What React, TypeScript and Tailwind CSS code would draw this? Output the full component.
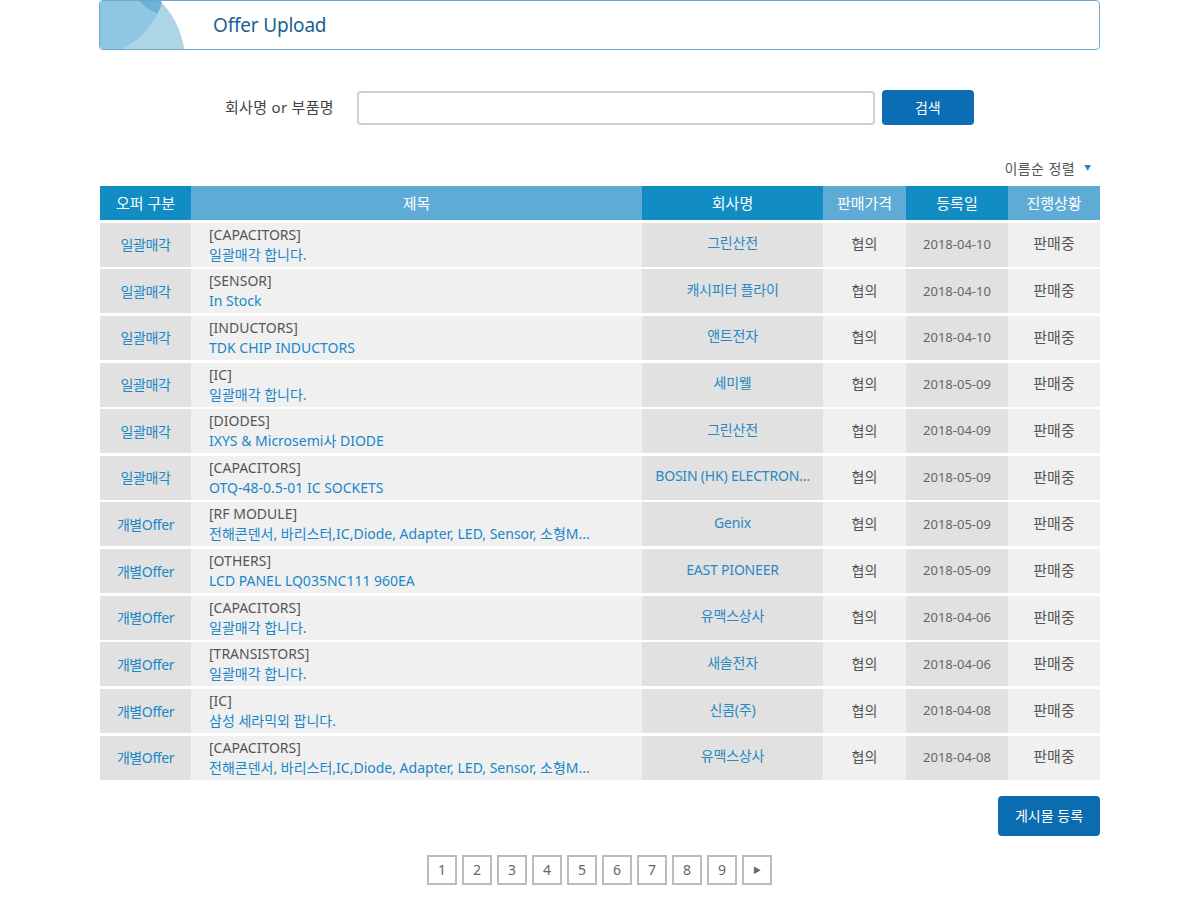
const rows = [
  { type: "일괄매각", cat: "[CAPACITORS]", title: "일괄매각 합니다.", company: "그린산전", date: "2018-04-10" },
  { type: "일괄매각", cat: "[SENSOR]", title: "In Stock", company: "캐시피터 플라이", date: "2018-04-10" },
  { type: "일괄매각", cat: "[INDUCTORS]", title: "TDK CHIP INDUCTORS", company: "앤트전자", date: "2018-04-10" },
  { type: "일괄매각", cat: "[IC]", title: "일괄매각 합니다.", company: "세미웰", date: "2018-05-09" },
  { type: "일괄매각", cat: "[DIODES]", title: "IXYS & Microsemi사 DIODE", company: "그린산전", date: "2018-04-09" },
  { type: "일괄매각", cat: "[CAPACITORS]", title: "OTQ-48-0.5-01 IC SOCKETS", company: "BOSIN (HK) ELECTRON...", date: "2018-05-09" },
  { type: "개별Offer", cat: "[RF MODULE]", title: "전해콘덴서, 바리스터,IC,Diode, Adapter, LED, Sensor, 소형M...", company: "Genix", date: "2018-05-09" },
  { type: "개별Offer", cat: "[OTHERS]", title: "LCD PANEL LQ035NC111 960EA", company: "EAST PIONEER", date: "2018-05-09" },
  { type: "개별Offer", cat: "[CAPACITORS]", title: "일괄매각 합니다.", company: "유맥스상사", date: "2018-04-06" },
  { type: "개별Offer", cat: "[TRANSISTORS]", title: "일괄매각 합니다.", company: "새솔전자", date: "2018-04-06" },
  { type: "개별Offer", cat: "[IC]", title: "삼성 세라믹외 팝니다.", company: "신콤(주)", date: "2018-04-08" },
  { type: "개별Offer", cat: "[CAPACITORS]", title: "전해콘덴서, 바리스터,IC,Diode, Adapter, LED, Sensor, 소형M...", company: "유맥스상사", date: "2018-04-08" },
];

const BannerArt = () => (
  <svg width="86" height="48" viewBox="0 0 86 48" className="shrink-0">
    <defs>
      <clipPath id="c1">
        <circle cx="0" cy="60" r="85" />
      </clipPath>
      <clipPath id="c2">
        <circle cx="-10" cy="-20" r="75" />
      </clipPath>
    </defs>
    <circle cx="0" cy="60" r="85" fill="#acd5e8" />
    <g clipPath="url(#c1)">
      <circle cx="-10" cy="-20" r="75" fill="#8fc6e1" />
      <g clipPath="url(#c2)">
        <circle cx="82" cy="-42" r="60" fill="#6eb1d7" />
      </g>
    </g>
  </svg>
);

export default function App() {
  return (
    <div
      className="w-[1200px] min-h-[910px] bg-white text-[14px] text-[#555]"
      style={{ fontFamily: '"Noto Sans", "Noto Sans CJK KR", sans-serif' }}
    >
      <div className="w-[1001px] ml-[99px]">
        {/* banner */}
        <div className="flex items-center h-[50px] border border-[#6aa8cc] rounded-[4px] overflow-hidden">
          <BannerArt />
          <span className="ml-[27px] text-[19px] text-[#1a5f94] tracking-[-0.2px]">Offer Upload</span>
        </div>

        {/* search */}
        <div className="flex items-center mt-[40px] h-[35px]">
          <span className="ml-[126px] text-[15px] text-[#444] tracking-[0.3px]">회사명 or 부품명</span>
          <input className="ml-[23px] w-[518px] h-[34px] border-2 border-[#cfcfcf] rounded-[4px] outline-none px-2" />
          <button className="ml-[7px] w-[92px] h-[35px] bg-[#0b6db3] rounded-[4px] text-white text-[14px]">검색</button>
        </div>

        {/* sort */}
        <div className="flex justify-end items-center mt-[34px] h-[18px] pr-[9px] text-[14px] text-[#555]">
          <span className="tracking-[0.4px]">이름순 정렬</span>
          <span className="ml-[9px] text-[7px] text-[#1a87c6]">▼</span>
        </div>

        {/* table */}
        <div className="mt-[9px] ml-[1px] w-[1000px]">
          <div className="flex h-[34px] text-white text-[15px]">
            <div className="w-[91px] bg-[#118dc4] flex items-center justify-center">오퍼 구분</div>
            <div className="w-[451px] bg-[#5eabd6] flex items-center justify-center">제목</div>
            <div className="w-[181px] bg-[#118dc4] flex items-center justify-center">회사명</div>
            <div className="w-[83px] bg-[#5eabd6] flex items-center justify-center">판매가격</div>
            <div className="w-[102px] bg-[#118dc4] flex items-center justify-center">등록일</div>
            <div className="w-[92px] bg-[#5eabd6] flex items-center justify-center">진행상황</div>
          </div>
          {rows.map((r, i) => (
            <div key={i} className="flex h-[44px] mt-[2.65px]">
              <div className="w-[91px] bg-[#e1e1e1] flex items-center justify-center text-[#1a87c6] tracking-[-0.4px]">
                {r.type}
              </div>
              <div className="w-[451px] bg-[#f0f0f0] flex flex-col justify-center pl-[18px] leading-[20px]">
                <span className="text-[#555]">{r.cat}</span>
                <span className="text-[#1a87c6] whitespace-nowrap">{r.title}</span>
              </div>
              <div className="w-[181px] bg-[#e1e1e1] flex items-center justify-center pb-[4px] text-[#2a88c3] text-[14px] tracking-[-0.2px] whitespace-nowrap">
                {r.company}
              </div>
              <div className="w-[83px] bg-[#f0f0f0] flex items-center justify-center pb-[2px] text-[#555]">협의</div>
              <div className="w-[102px] bg-[#e1e1e1] flex items-center justify-center text-[13px] text-[#666]">
                {r.date}
              </div>
              <div className="w-[92px] bg-[#f0f0f0] flex items-center justify-center pb-[2px] text-[15px] text-[#555]">판매중</div>
            </div>
          ))}
        </div>

        {/* register */}
        <div className="flex justify-end mt-[16px]">
          <button className="w-[102px] h-[40px] bg-[#0b6db0] rounded-[4px] text-white text-[14px]">게시물 등록</button>
        </div>

        {/* pagination */}
        <div className="flex justify-center gap-[5px] mt-[19px]">
          {["1", "2", "3", "4", "5", "6", "7", "8", "9"].map((n) => (
            <div
              key={n}
              className="w-[30px] h-[30px] border-2 border-[#bbb] flex items-center justify-center text-[14px] text-[#666]"
            >
              {n}
            </div>
          ))}
          <div className="w-[30px] h-[30px] border-2 border-[#bbb] flex items-center justify-center text-[8px] text-[#666]">
            ▶
          </div>
        </div>
      </div>
    </div>
  );
}
